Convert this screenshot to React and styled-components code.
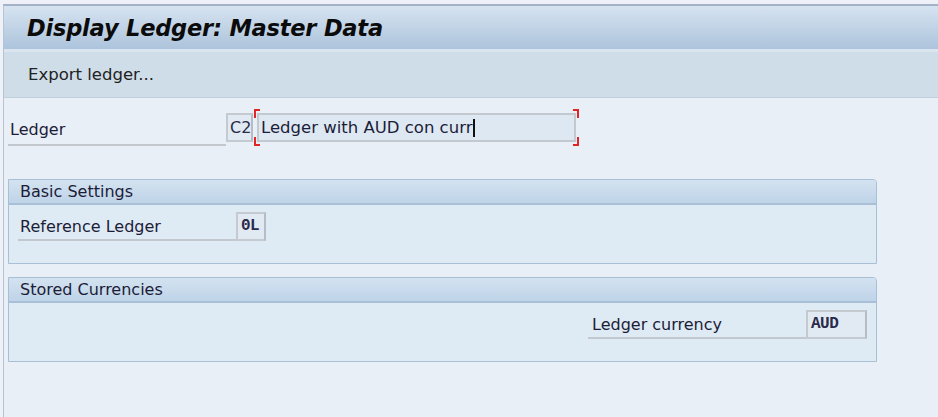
import React from "react";
import styled, { createGlobalStyle } from "styled-components";

const GlobalStyle = createGlobalStyle`
  html, body {
    margin: 0;
    padding: 0;
    background: #e9eff7;
  }
  body {
    font-family: "DejaVu Sans", "Liberation Sans", sans-serif;
  }
`;

const Page = styled.div`
  width: 938px;
  height: 417px;
  overflow: hidden;
  background: #eef2f8;
  padding-top: 4px;
  box-sizing: border-box;
`;

const Frame = styled.div`
  margin-left: 3px;
  height: 100%;
  border-left: 1px solid #b7c4d4;
  border-top: 2px solid #a3b2c6;
  background: #e9eff7;
`;

const TitleBar = styled.div`
  height: 43px;
  display: flex;
  align-items: center;
  padding-left: 23px;
  background: linear-gradient(#d6e3f0, #adc4dc);
  border-bottom: 3px solid #dbe5f0;
`;

const Title = styled.h1`
  margin: 0;
  font-family: "DejaVu Sans", sans-serif;
  font-size: 22.5px;
  font-weight: bold;
  font-style: italic;
  color: #0b0b0b;
  letter-spacing: -0.2px;
`;

const Toolbar = styled.div`
  height: 45px;
  display: flex;
  align-items: center;
  padding-left: 24px;
  background: #cfdde8;
  border-bottom: 1px solid #c1cfdc;
`;

const ToolButton = styled.span`
  font-size: 16.5px;
  color: #222;
`;

const Content = styled.div`
  padding: 11px 60px 0 4px;
`;

const Row = styled.div`
  display: flex;
  align-items: center;
  justify-content: ${({ $end }) => ($end ? "flex-end" : "flex-start")};
`;

const Label = styled.div`
  width: ${({ $w }) => $w}px;
  box-sizing: border-box;
  padding-left: ${({ $pl }) => $pl || 2}px;
  padding-top: ${({ $pt }) => $pt || 4}px;
  height: 30px;
  font-size: 16px;
  color: #1c1c38;
  border-bottom: 2px solid #c3c8ce;
  align-self: flex-end;
`;

const Box = styled.div`
  width: ${({ $w }) => $w}px;
  height: 29px;
  box-sizing: border-box;
  display: flex;
  align-items: center;
  padding-left: ${({ $pl }) => $pl || 3}px;
  background: #e1eaf3;
  border: 2px solid #c5cad0;
  border-right-color: #b6bcc3;
  font-size: 16px;
  font-family: ${({ $mono }) => ($mono ? '"Liberation Mono", monospace' : "inherit")};
  font-weight: ${({ $mono }) => ($mono ? "bold" : "normal")};
  letter-spacing: ${({ $mono }) => ($mono ? "-0.5px" : "0")};
  color: #2a2a4a;
`;

const Required = styled.div`
  position: relative;
  padding: 4px 3px;
  margin-left: 1px;
`;

const Corner = styled.span`
  position: absolute;
  width: 4px;
  height: 7px;
  border-color: #e02626;
  border-style: solid;
  border-width: 0;
  ${({ $pos }) => ($pos.includes("t") ? "top: 0; border-top-width: 2px;" : "bottom: 0; border-bottom-width: 2px;")}
  ${({ $pos }) => ($pos.includes("l") ? "left: 0; border-left-width: 2px;" : "right: 0; border-right-width: 2px;")}
`;

const TextInput = styled.div`
  width: 319px;
  height: 29px;
  box-sizing: border-box;
  display: flex;
  align-items: center;
  padding-left: 2px;
  background: #dde8f2;
  border: 2px solid #c4c9cf;
  font-size: 16.5px;
  color: #1c1c38;
`;

const Caret = styled.span`
  display: inline-block;
  width: 2px;
  height: 18px;
  background: #111;
  margin-left: 1px;
`;

const Group = styled.section`
  margin-top: ${({ $mt }) => $mt}px;
  width: 869px;
  box-sizing: border-box;
  border: 1px solid #a9bfd6;
  border-radius: 0 4px 0 0;
  background: #deeaf4;
`;

const GroupHeader = styled.div`
  height: 25px;
  box-sizing: border-box;
  padding: 2px 0 0 11px;
  font-size: 16px;
  color: #1c1c38;
  background: linear-gradient(#d3e2f0, #bfd4e8);
  border-bottom: 2px solid #a9bfd6;
  border-radius: 0 3px 0 0;
`;

const GroupBody = styled.div`
  height: 58px;
  box-sizing: border-box;
  padding: ${({ $pad }) => $pad};
`;

export default function App() {
  return (
    <>
      <GlobalStyle />
      <Page>
        <Frame>
          <TitleBar>
            <Title>Display Ledger: Master Data</Title>
          </TitleBar>
          <Toolbar>
            <ToolButton>Export ledger...</ToolButton>
          </Toolbar>
          <Content>
            <Row>
              <Label $w={218}>Ledger</Label>
              <Box $w={27} $pl={2}>C2</Box>
              <Required>
                <Corner $pos="tl" />
                <Corner $pos="bl" />
                <Corner $pos="tr" />
                <Corner $pos="br" />
                <TextInput>
                  Ledger with AUD con curr
                  <Caret />
                </TextInput>
              </Required>
            </Row>

            <Group $mt={33}>
              <GroupHeader>Basic Settings</GroupHeader>
              <GroupBody $pad="6px 0 0 9px">
                <Row>
                  <Label $w={218} $pt={6}>Reference Ledger</Label>
                  <Box $w={30} $mono>0L</Box>
                </Row>
              </GroupBody>
            </Group>

            <Group $mt={13}>
              <GroupHeader>Stored Currencies</GroupHeader>
              <GroupBody $pad="6px 9px 0 0">
                <Row $end>
                  <Label $w={218} $pt={6} $pl={4}>Ledger currency</Label>
                  <Box $w={61} $mono>AUD</Box>
                </Row>
              </GroupBody>
            </Group>
          </Content>
        </Frame>
      </Page>
    </>
  );
}
